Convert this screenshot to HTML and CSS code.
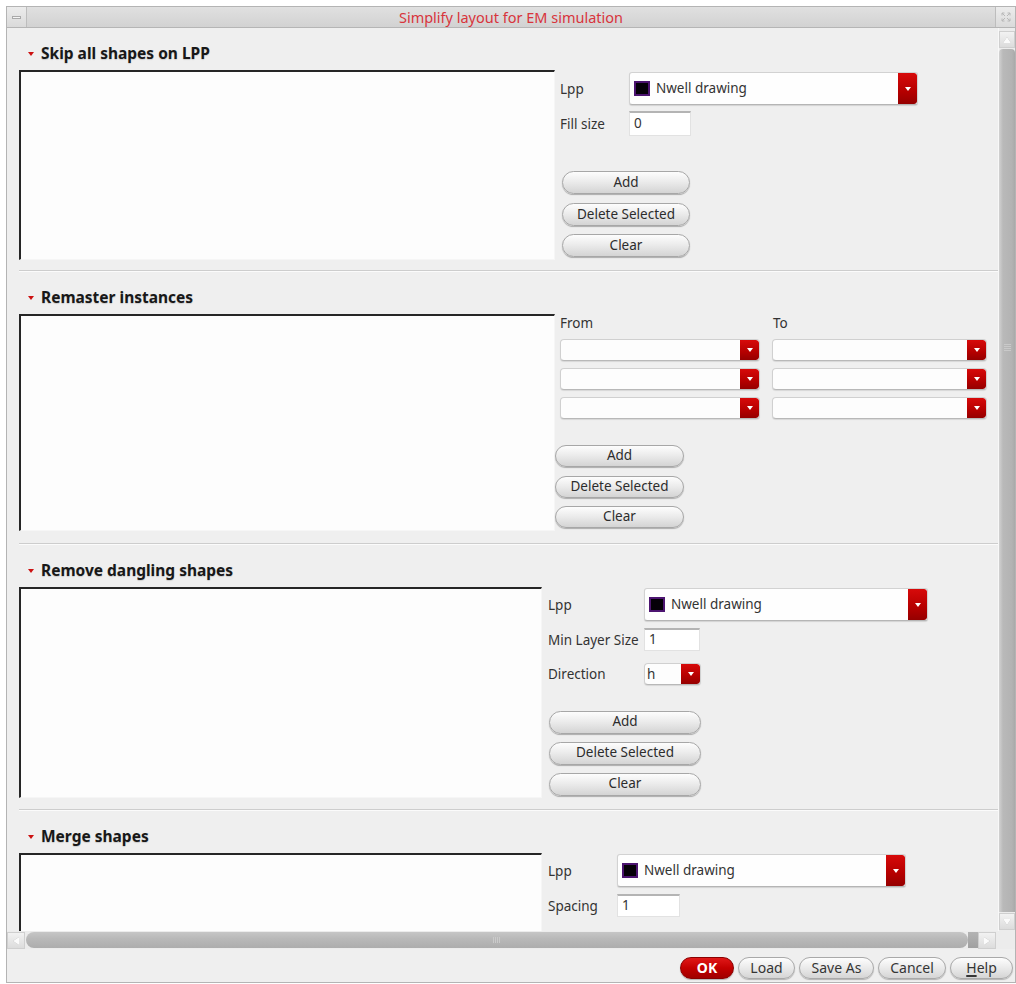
FILE: index.html
```html
<!DOCTYPE html>
<html>
<head>
<meta charset="utf-8">
<title>Simplify layout for EM simulation</title>
<link rel="stylesheet" href="styles.css">
</head>
<body>
<div class="window">
  <div class="titlebar">
    <div class="tb-btn tb-min"><span class="min-glyph"></span></div>
    <div class="title">Simplify layout for EM simulation</div>
    <div class="tb-btn tb-close">
      <svg width="12" height="12" viewBox="0 0 12 12"><path d="M2 2 L5 5 M10 2 L7 5 M2 10 L5 7 M10 10 L7 7 M2 2 h2.5 M2 2 v2.5 M10 2 h-2.5 M10 2 v2.5 M2 10 h2.5 M2 10 v-2.5 M10 10 h-2.5 M10 10 v-2.5" stroke="#b8b8b8" stroke-width="1" fill="none"/></svg>
    </div>
  </div>

  <div class="main">
    <div class="viewport">

      <section class="sec sec1">
        <div class="sec-head"><span class="tri"></span>Skip all shapes on LPP</div>
        <div class="sec-body">
          <div class="list l-wide h190"></div>
          <div class="side side1">
            <div class="row lpp-row">
              <span class="lbl w69">Lpp</span>
              <div class="lpp w289"><span class="swatch"></span><span class="lpp-text">Nwell drawing</span><span class="drop"><i class="arrow"></i></span></div>
            </div>
            <div class="row field-row">
              <span class="lbl w69">Fill size</span>
              <div class="field w62">0</div>
            </div>
            <div class="btns b1">
              <div class="btn">Add</div>
              <div class="btn">Delete Selected</div>
              <div class="btn">Clear</div>
            </div>
          </div>
        </div>
      </section>
      <div class="sep"></div>

      <section class="sec sec2">
        <div class="sec-head"><span class="tri"></span>Remaster instances</div>
        <div class="sec-body">
          <div class="list l-wide h217"></div>
          <div class="side side2">
            <div class="ft-grid">
              <span class="ft-lbl">From</span>
              <span class="ft-lbl">To</span>
              <div class="combo"><span class="combo-text"></span><span class="drop"><i class="arrow"></i></span></div>
              <div class="combo"><span class="combo-text"></span><span class="drop"><i class="arrow"></i></span></div>
              <div class="combo"><span class="combo-text"></span><span class="drop"><i class="arrow"></i></span></div>
              <div class="combo"><span class="combo-text"></span><span class="drop"><i class="arrow"></i></span></div>
              <div class="combo"><span class="combo-text"></span><span class="drop"><i class="arrow"></i></span></div>
              <div class="combo"><span class="combo-text"></span><span class="drop"><i class="arrow"></i></span></div>
            </div>
            <div class="btns b2">
              <div class="btn">Add</div>
              <div class="btn">Delete Selected</div>
              <div class="btn">Clear</div>
            </div>
          </div>
        </div>
      </section>
      <div class="sep"></div>

      <section class="sec sec3">
        <div class="sec-head"><span class="tri"></span>Remove dangling shapes</div>
        <div class="sec-body">
          <div class="list l-narrow h211"></div>
          <div class="side side3">
            <div class="row lpp-row">
              <span class="lbl w96">Lpp</span>
              <div class="lpp w284"><span class="swatch"></span><span class="lpp-text">Nwell drawing</span><span class="drop"><i class="arrow"></i></span></div>
            </div>
            <div class="row field-row3">
              <span class="lbl w96">Min Layer Size</span>
              <div class="field w56 h23">1</div>
            </div>
            <div class="row dir-row">
              <span class="lbl w96">Direction</span>
              <div class="combo w57"><span class="combo-text">h</span><span class="drop"><i class="arrow"></i></span></div>
            </div>
            <div class="btns b3">
              <div class="btn">Add</div>
              <div class="btn">Delete Selected</div>
              <div class="btn">Clear</div>
            </div>
          </div>
        </div>
      </section>
      <div class="sep"></div>

      <section class="sec sec4">
        <div class="sec-head"><span class="tri"></span>Merge shapes</div>
        <div class="sec-body">
          <div class="list l-narrow h200"></div>
          <div class="side side3">
            <div class="row lpp-row">
              <span class="lbl w69">Lpp</span>
              <div class="lpp w289"><span class="swatch"></span><span class="lpp-text">Nwell drawing</span><span class="drop"><i class="arrow"></i></span></div>
            </div>
            <div class="row field-row3">
              <span class="lbl w69">Spacing</span>
              <div class="field w63 h23">1</div>
            </div>
          </div>
        </div>
      </section>

    </div>
    <div class="vscroll">
      <div class="sb-arrow"><i class="a-up"></i></div>
      <div class="v-thumb"><span class="v-grip"></span></div>
      <div class="sb-arrow"><i class="a-down"></i></div>
    </div>
  </div>

  <div class="hscroll">
    <div class="sb-arrow h"><i class="a-left"></i></div>
    <div class="h-track">
      <div class="h-thumb"><span class="h-grip"></span></div>
      <div class="h-end"></div>
    </div>
    <div class="sb-arrow h"><i class="a-right"></i></div>
    <div class="corner"></div>
  </div>

  <div class="footer">
    <div class="fbtn ok">OK</div>
    <div class="fbtn w57">Load</div>
    <div class="fbtn w75">Save As</div>
    <div class="fbtn w68">Cancel</div>
    <div class="fbtn w63"><u>H</u>elp</div>
  </div>
</div>
</body>
</html>
```
FILE: styles.css
```css
* { box-sizing: border-box; }
html, body { margin: 0; padding: 0; background: #ffffff; }
body {
  font-family: "Noto Sans", "Open Sans", "DejaVu Sans", sans-serif;
  font-size: 13.5px;
  color: #353535;
}

.window {
  margin: 6px 0 0 6px;
  width: 1010px;
  height: 977px;
  border: 1px solid #b4b4b4;
  background: #eeeeee;
  display: flex;
  flex-direction: column;
  overflow: hidden;
}

/* title bar */
.titlebar {
  height: 21px;
  flex: none;
  display: flex;
  background: linear-gradient(#e0e0e0, #d2d2d2);
  border-bottom: 1px solid #b5b5b5;
}
.tb-btn {
  width: 20px;
  flex: none;
  display: flex;
  align-items: center;
  justify-content: center;
  background: linear-gradient(#ececec, #dadada);
}
.tb-min { border-right: 1px solid #bdbdbd; }
.tb-close { border-left: 1px solid #bdbdbd; }
.min-glyph {
  width: 9px;
  height: 3px;
  border: 1px solid #a9a9a9;
  background: #f4f4f4;
}
.title {
  flex: 1;
  text-align: center;
  color: #d8343c;
  font-size: 14.5px;
  line-height: 20px;
}

/* main area */
.main {
  height: 903px;
  flex: none;
  display: flex;
}
.viewport {
  width: 991px;
  flex: none;
  overflow: hidden;
  background: #efefef;
}

.sec { padding: 15px 0 0 12px; }
.sec1 { padding-bottom: 10px; }
.sec2 { padding-bottom: 12px; }
.sec3 { padding-bottom: 11px; }

.sep {
  height: 2px;
  margin-left: 12px;
  border-top: 1px solid #cdcdcd;
  border-bottom: 1px solid #fbfbfb;
}

.sec-head {
  height: 20px;
  display: flex;
  align-items: center;
  padding-left: 9px;
  font-weight: bold;
  font-size: 15.5px;
  color: #181818;
  text-shadow: 0 1px 1px rgba(0,0,0,0.15);
}
.tri {
  width: 0;
  height: 0;
  border-left: 3.5px solid transparent;
  border-right: 3.5px solid transparent;
  border-top: 4.5px solid #cc1111;
  margin-right: 7px;
  margin-top: 1px;
}

.sec-body {
  margin-top: 7px;
  display: flex;
  align-items: flex-start;
}

.list {
  flex: none;
  background: #fdfdfd;
  border-top: 2px solid #262626;
  border-left: 2px solid #262626;
  border-right: 1px solid #f6f6f6;
  border-bottom: 1px solid #f6f6f6;
}
.l-wide { width: 536px; }
.l-narrow { width: 523px; }
.h190 { height: 190px; }
.h217 { height: 217px; }
.h211 { height: 211px; }
.h200 { height: 200px; }

.side { display: flex; flex-direction: column; }
.side1 { padding-left: 5px; }
.side2 { padding-left: 0; }
.side3 { padding-left: 6px; }

.row { display: flex; align-items: center; }
.lbl { flex: none; color: #333; line-height: 18px; }
.w69 { width: 69px; }
.w96 { width: 96px; }

.lpp-row { margin-top: 1px; }
.side1 .lpp-row { margin-top: 2px; }
.field-row { margin-top: 6px; }
.field-row3 { margin-top: 7px; }
.dir-row { margin-top: 12px; }

/* large LPP dropdown */
.lpp {
  height: 33px;
  display: flex;
  align-items: center;
  background: #fefefe;
  border: 1px solid #d2d2d2;
  border-bottom-color: #b5b5b5;
  border-radius: 3px;
  box-shadow: 0 1px 1px rgba(0,0,0,0.12);
  padding-left: 4px;
  overflow: hidden;
}
.w289 { width: 289px; }
.w284 { width: 284px; }
.swatch {
  width: 16px;
  height: 15px;
  flex: none;
  background: #050008;
  border: 2px solid #4c1470;
  margin-top: -1px;
}
.lpp-text {
  margin-left: 6px;
  color: #333;
  margin-top: -1px;
}
.drop {
  margin-left: auto;
  align-self: stretch;
  width: 19px;
  flex: none;
  background: linear-gradient(#d70a0a, #b50000 60%, #950000);
  border-radius: 0 3px 3px 0;
  display: flex;
  align-items: center;
  justify-content: center;
}
.arrow {
  width: 0;
  height: 0;
  border-left: 3.5px solid transparent;
  border-right: 3.5px solid transparent;
  border-top: 4px solid #ffffff;
}

/* text field */
.field {
  height: 25px;
  background: #ffffff;
  border: 1px solid #e2e2e2;
  border-top: 2px solid #b4b4b4;
  padding-left: 4px;
  line-height: 20px;
  color: #333;
}
.h23 { height: 23px; line-height: 19px; }
.w62 { width: 62px; }
.w56 { width: 56px; }
.w63 { width: 63px; }

/* small combos */
.combo {
  height: 22px;
  display: flex;
  background: #fdfdfd;
  border: 1px solid #d0d0d0;
  border-bottom-color: #b8b8b8;
  border-radius: 4px;
  box-shadow: 0 1px 1px rgba(0,0,0,0.1);
  overflow: hidden;
}
.combo-text { padding-left: 2px; line-height: 20px; color: #333; }
.w57 { width: 57px; }

.ft-grid {
  display: grid;
  grid-template-columns: 200px 215px;
  column-gap: 12px;
  row-gap: 7px;
  margin-left: 5px;
  grid-template-rows: 18px 22px 22px 22px;
}
.ft-lbl { line-height: 18px; color: #333; margin-bottom: 1px; }
.ft-lbl + .ft-lbl { padding-left: 1px; }

/* buttons */
.btns { display: flex; flex-direction: column; }
.btn {
  height: 23px;
  border: 1px solid #a7a7a7;
  border-radius: 12px;
  background: linear-gradient(#fdfdfd, #ececec 45%, #d4d4d4);
  box-shadow: 0 1px 1px rgba(0,0,0,0.28);
  text-align: center;
  line-height: 20px;
  color: #2c2c2c;
  font-size: 13.5px;
}
.b1 { margin-top: 35px; margin-left: 2px; width: 128px; gap: 8.5px; }
.b2 { margin-top: 26px; width: 129px; gap: 8.5px; }
.b2 .btn { height: 22px; line-height: 19px; }
.b3 { margin-top: 26px; margin-left: 1px; width: 152px; gap: 8.5px; }
.b3 .btn { height: 22.5px; line-height: 19px; }

/* vertical scrollbar */
.vscroll {
  width: 17px;
  flex: none;
  display: flex;
  flex-direction: column;
  padding: 3px 0 1px;
  background: #ececec;
  border-left: 1px solid #f8f8f8;
}
.sb-arrow {
  height: 17px;
  flex: none;
  background: linear-gradient(#f2f2f2, #dcdcdc);
  border: 1px solid #cfcfcf;
  display: flex;
  align-items: center;
  justify-content: center;
}
.a-up, .a-down, .a-left, .a-right { width: 0; height: 0; }
.a-up { border-left: 4px solid transparent; border-right: 4px solid transparent; border-bottom: 6px solid #fbfbfb; filter: drop-shadow(0 0 0.6px #a0a0a0); }
.a-down { border-left: 4px solid transparent; border-right: 4px solid transparent; border-top: 6px solid #fbfbfb; filter: drop-shadow(0 0 0.6px #a0a0a0); }
.a-left { border-top: 4px solid transparent; border-bottom: 4px solid transparent; border-right: 6px solid #fbfbfb; filter: drop-shadow(0 0 0.6px #a0a0a0); }
.a-right { border-top: 4px solid transparent; border-bottom: 4px solid transparent; border-left: 6px solid #fbfbfb; filter: drop-shadow(0 0 0.6px #a0a0a0); }
.v-thumb {
  flex: 1;
  margin: 1px 0 1px 0;
  background: linear-gradient(90deg, #d2d2d2, #b9b9b9 25%, #b3b3b3 80%, #a9a9a9);
  border-radius: 4px 4px 0 0;
  display: flex;
  justify-content: center;
  padding-top: 295px;
}
.v-grip {
  width: 7px;
  height: 8px;
  background: repeating-linear-gradient(#c9c9c9 0 1px, transparent 1px 2px);
}

/* horizontal scrollbar */
.hscroll {
  height: 18px;
  flex: none;
  display: flex;
  padding-top: 1px;
  background: #ececec;
}
.sb-arrow.h { width: 18px; height: 17px; }
.h-track {
  flex: 1;
  display: flex;
  padding: 0 0 1px 1px;
}
.h-thumb {
  flex: 1;
  border-radius: 8px;
  background: linear-gradient(#c6c6c6, #b9b9b9 40%, #adadad);
  display: flex;
  align-items: center;
  justify-content: center;
}
.h-grip {
  width: 8px;
  height: 6px;
  background: repeating-linear-gradient(90deg, #cacaca 0 1px, transparent 1px 2px);
}
.h-end {
  width: 10px;
  background: linear-gradient(#b3b3b3, #a0a0a0);
}
.corner { width: 19px; flex: none; }

/* footer */
.footer {
  flex: 1;
  display: flex;
  justify-content: flex-end;
  align-items: flex-start;
  gap: 4px;
  padding: 8px 2px 0 0;
  background: #efefef;
}
.fbtn {
  height: 22px;
  border: 1px solid #a9a9a9;
  border-radius: 11px;
  background: linear-gradient(#fdfdfd, #ececec 45%, #d5d5d5);
  box-shadow: 0 1px 1px rgba(0,0,0,0.25);
  text-align: center;
  line-height: 19px;
  font-size: 14px;
  color: #353535;
}
.fbtn u { text-decoration-thickness: 2px; text-underline-offset: 2px; }
.fbtn.ok {
  width: 54px;
  color: #ffffff;
  font-weight: bold;
  border-color: #8a0000;
  background: linear-gradient(#e01818, #c40000 50%, #a00000);
}
.fbtn.w57 { width: 57px; }
.fbtn.w75 { width: 75px; }
.fbtn.w68 { width: 68px; }
.fbtn.w63 { width: 63px; }
```
